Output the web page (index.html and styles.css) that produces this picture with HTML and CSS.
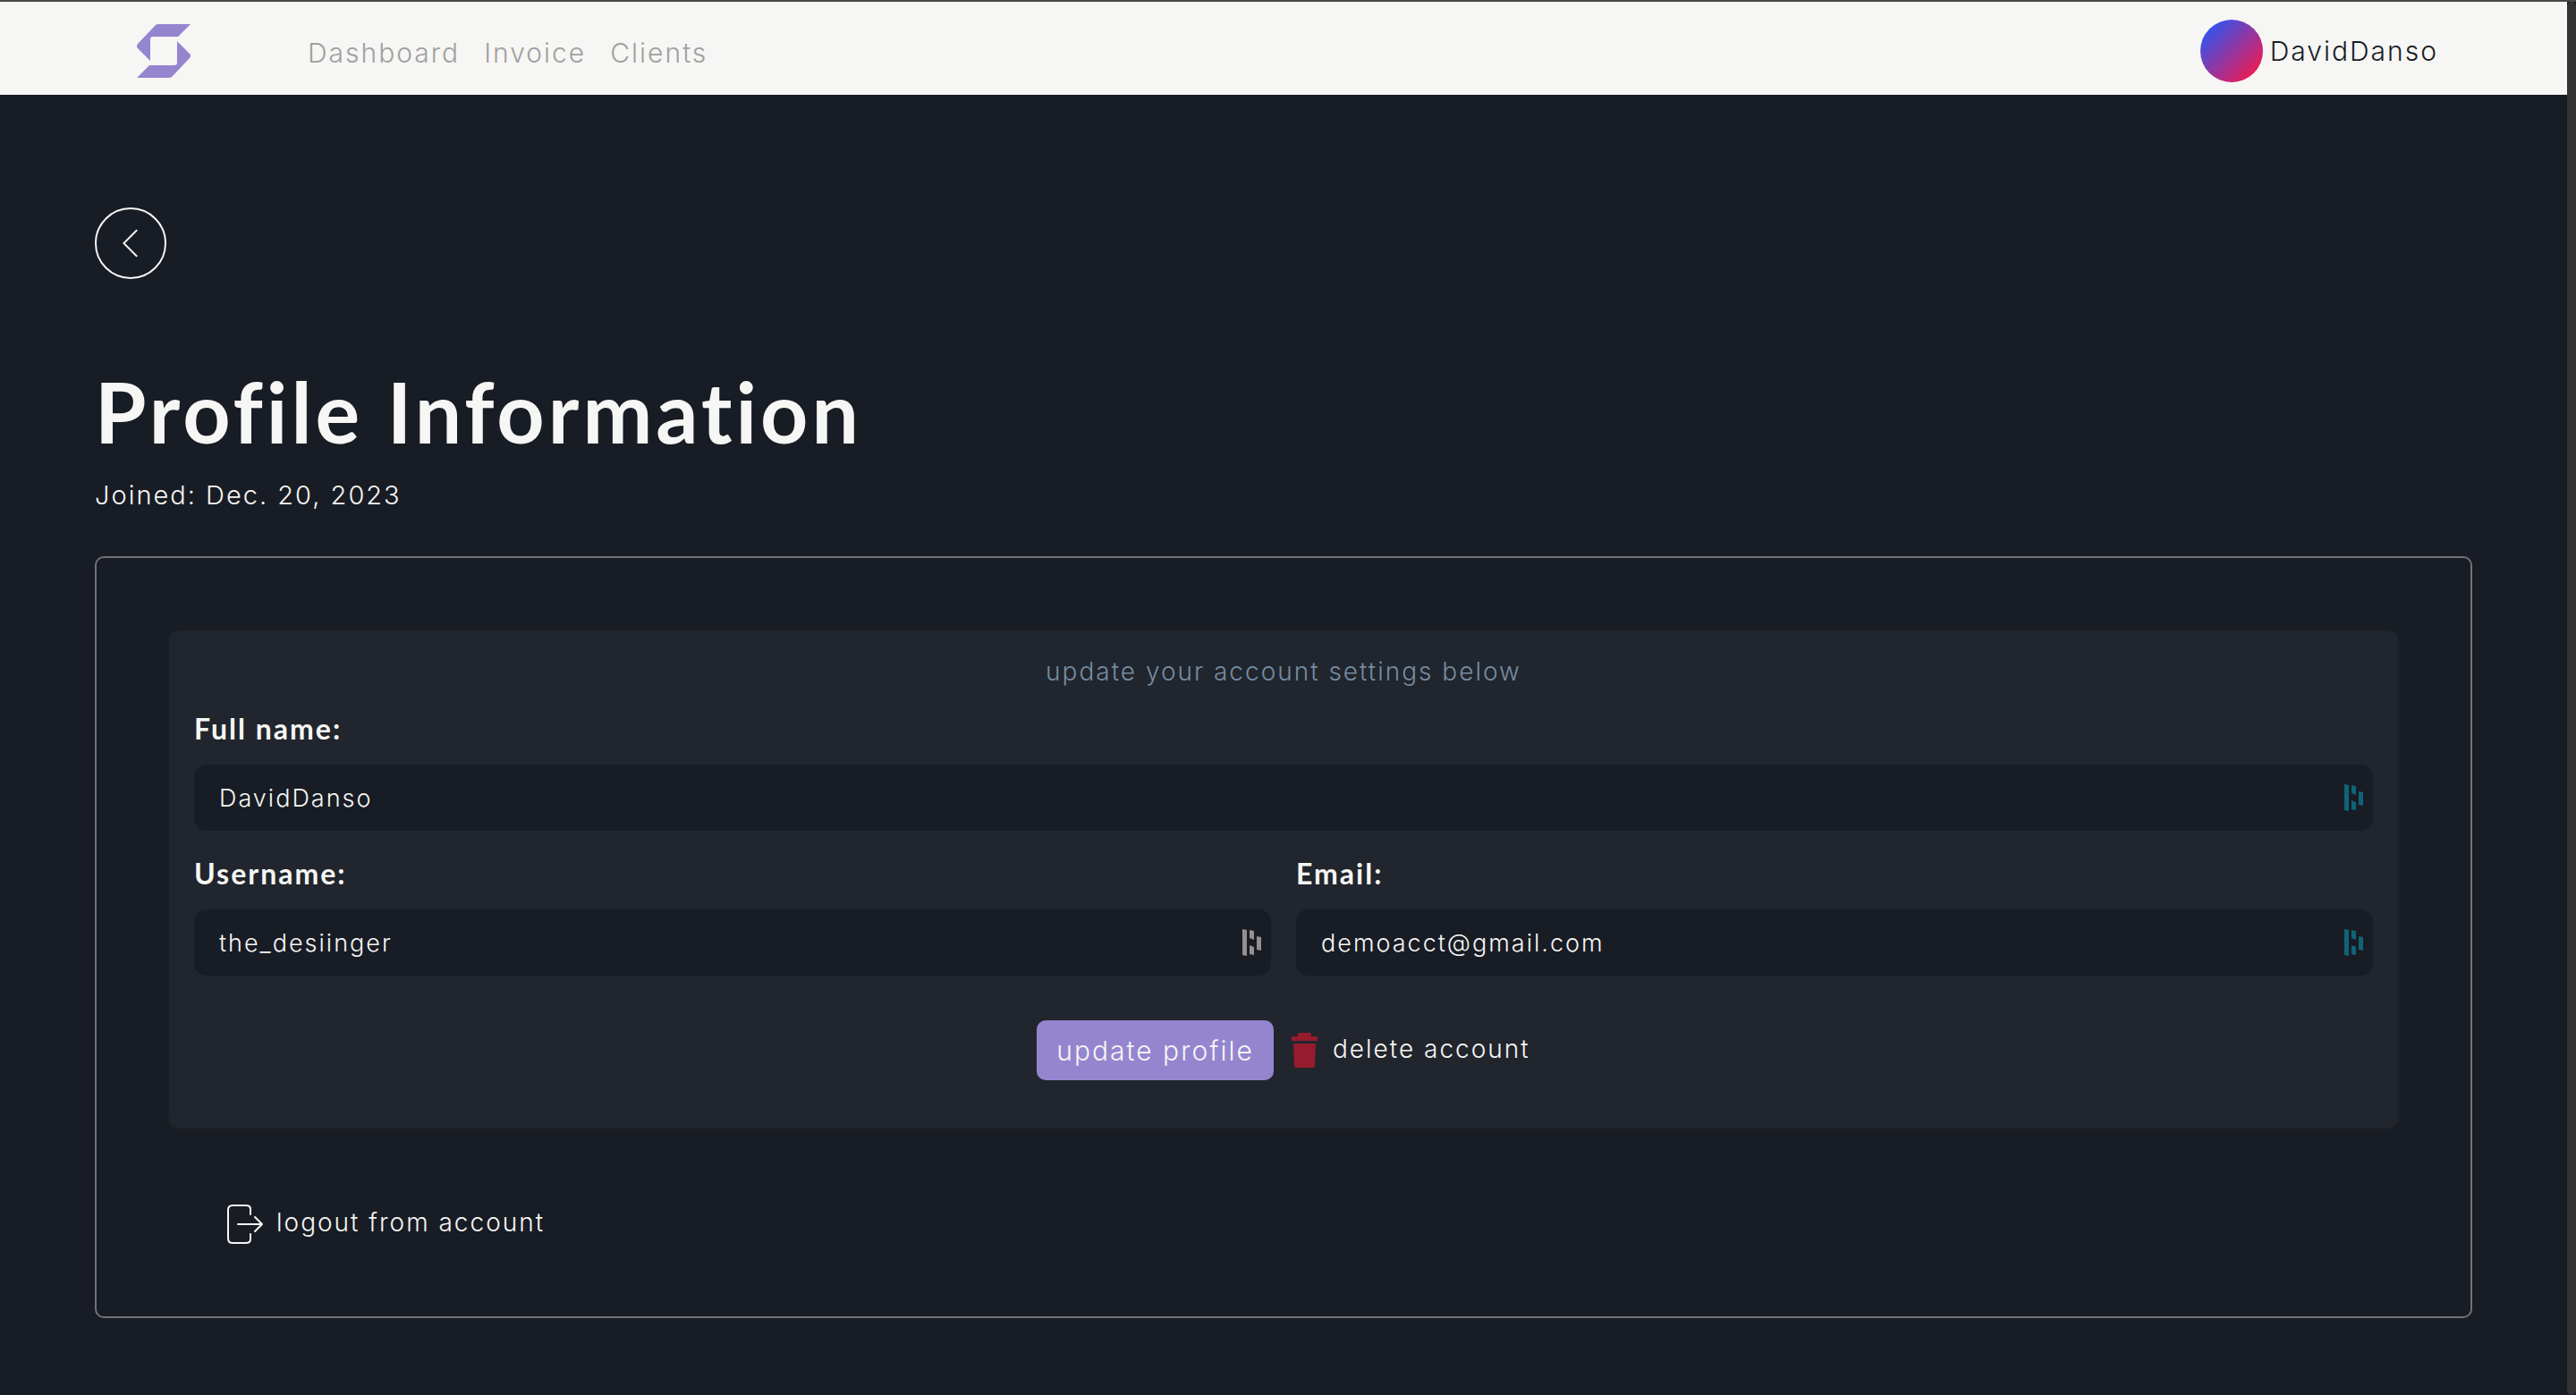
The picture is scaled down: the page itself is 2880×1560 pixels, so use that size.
FILE: index.html
```html
<!DOCTYPE html>
<html lang="en">
<head>
<meta charset="utf-8">
<meta name="viewport" content="width=device-width, initial-scale=1">
<title>Profile Information</title>
<link rel="stylesheet" href="styles.css">
</head>
<body>
<svg class="defs" aria-hidden="true">
  <symbol id="autofill" viewBox="0 0 21 30">
    <path d="M0 0l5 1v29l-5-1zM8 1l5 1v10l-5-2zM8 18l5 2v9l-5-1zM16 8l5 1v15l-5-1z"/>
  </symbol>
</svg>
<div class="window">
  <div class="page">
    <header class="topbar">
      <a class="logo" href="#" aria-label="Home">
        <svg viewBox="0 0 60 60"><path d="M24 0H60L46 14H18Q15 14 15 17V41L1 27Q-1 25 1 22L20 2Q21 0 24 0ZM36 60H0L14 46H42Q45 46 45 43V19L59 33Q61 35 59 38L40 58Q39 60 36 60Z"/></svg>
      </a>
      <nav class="nav">
        <a href="#">Dashboard</a>
        <a href="#">Invoice</a>
        <a href="#">Clients</a>
      </nav>
      <a class="user" href="#"><span class="avatar"></span>DavidDanso</a>
    </header>
    <main class="content">
      <button class="back" type="button" aria-label="Back">
        <svg viewBox="0 0 80 80"><path d="M47 25L32 40L47 55"/></svg>
      </button>
      <h1>Profile Information</h1>
      <p class="joined">Joined: Dec. 20, 2023</p>
      <section class="card">
        <form class="panel">
          <p class="hint">update your account settings below</p>
          <div class="fields">
            <div class="field field-wide">
              <label for="fullname">Full name:</label>
              <div class="control">
                <input id="fullname" type="text" value="DavidDanso">
                <svg class="autofill"><use href="#autofill"/></svg>
              </div>
            </div>
            <div class="field">
              <label for="username">Username:</label>
              <div class="control">
                <input id="username" type="text" value="the_desiinger">
                <svg class="autofill muted"><use href="#autofill"/></svg>
              </div>
            </div>
            <div class="field">
              <label for="email">Email:</label>
              <div class="control">
                <input id="email" type="email" value="demoacct@gmail.com">
                <svg class="autofill"><use href="#autofill"/></svg>
              </div>
            </div>
          </div>
          <div class="actions">
            <button class="update" type="submit">update profile</button>
            <a class="delete" href="#">
              <svg viewBox="0 0 30 39"><path d="M0 4H7V1Q7 0 8 0H21Q22 0 22 1V4H29V9H0ZM2 12H27L26 37Q26 39 24 39H5Q3 39 3 37Z"/></svg>
              <span>delete account</span>
            </a>
          </div>
        </form>
        <a class="logout" href="#">
          <svg viewBox="0 0 42 46"><path d="M27 12V6Q27 2 22 2H7Q2 2 2 7V39Q2 44 7 44H22Q27 44 27 40V34M13 23H40M32 15L40 23L32 31"/></svg>
          <span>logout from account</span>
        </a>
      </section>
    </main>
  </div>
  <div class="scroll-track"></div>
</div>
</body>
</html>
```
FILE: styles.css
```css
:root {
  --bg: #181c24;
  --panel: #21252d;
  --light: #f6f6f4;
  --purple: #9585cf;
}
* { box-sizing: border-box; }
body {
  margin: 0;
  background: var(--bg);
  color: var(--light);
  font-family: Inter, "Liberation Sans", sans-serif;
  font-size: 28px;
  font-weight: 300;
  line-height: 40px;
  letter-spacing: 2px;
}
a { color: inherit; text-decoration: none; }
p, h1 { margin: 0; }
svg { display: block; }
.defs { display: none; }

.window {
  display: flex;
  min-height: 100vh;
  border-top: 2px solid #4a4846;
}
.page { flex: 1; min-width: 0; }
.scroll-track {
  width: 10px;
  background: #333;
  border-radius: 5px;
}

.topbar {
  display: flex;
  align-items: center;
  height: 104px;
  padding: 6px 144px 0 152px;
  background: var(--light);
  color: var(--bg);
  font-size: 30px;
}
.logo svg { width: 62px; height: 60px; fill: var(--purple); }
.nav {
  display: flex;
  gap: 27px;
  margin-left: 130px;
  padding-top: 4px;
  color: #a0a09f;
}
.user {
  display: flex;
  align-items: center;
  gap: 8px;
  margin-left: auto;
}
.avatar {
  width: 70px;
  height: 70px;
  border-radius: 50%;
  background: linear-gradient(135deg, #2b56f5 10%, #f3194f 90%);
}

.content { padding: 126px 106px 80px; }
.back {
  display: block;
  width: 80px;
  height: 80px;
  padding: 0;
  border: 2px solid var(--light);
  border-radius: 50%;
  background: none;
}
.back svg {
  width: 76px;
  height: 76px;
  fill: none;
  stroke: var(--light);
  stroke-width: 2;
  stroke-linecap: round;
}
h1 {
  margin-top: 92px;
  font-family: Lato, sans-serif;
  font-size: 93px;
  font-weight: 700;
  line-height: 112px;
  letter-spacing: 4px;
}
.joined { margin-top: 18px; font-size: 29px; }

.card {
  margin-top: 48px;
  padding: 80px 79px;
  border: 2px solid #727276;
  border-radius: 10px;
}
.panel {
  padding: 25px 28px 53px;
  border: 2px solid #1c2025;
  border-radius: 12px;
  background: var(--panel);
}
.hint { color: #768ca1; text-align: center; }
.fields {
  display: grid;
  grid-template-columns: 1fr 1fr;
  gap: 28px;
  margin-top: 24px;
}
.field-wide { grid-column: 1 / -1; }
.field label {
  display: block;
  margin-bottom: 20px;
  font-family: Lato, sans-serif;
  font-size: 32px;
  font-weight: 700;
}
.control { position: relative; }
.control input {
  display: block;
  width: 100%;
  height: 74px;
  padding: 0 60px 0 28px;
  border: 0;
  border-radius: 14px;
  background: var(--bg);
  color: inherit;
  font: inherit;
  font-size: 27px;
  letter-spacing: inherit;
}
.autofill {
  position: absolute;
  top: 22px;
  right: 11px;
  width: 21px;
  height: 30px;
  fill: #0e6577;
}
.autofill.muted { fill: #968f8d; }

.actions {
  display: flex;
  justify-content: center;
  align-items: center;
  gap: 20px;
  margin-top: 50px;
}
.update {
  height: 67px;
  padding: 0 22px;
  border: 0;
  border-radius: 10px;
  background: var(--purple);
  color: inherit;
  font: inherit;
  font-size: 30px;
  letter-spacing: inherit;
}
.delete, .logout { display: flex; align-items: center; gap: 16px; }
.delete span, .logout span { padding-bottom: 4px; }
.delete svg { width: 30px; height: 39px; fill: #951b2d; }
.logout {
  gap: 14px;
  width: max-content;
  margin: 83px 0 0 66px;
}
.logout svg {
  width: 42px;
  height: 46px;
  fill: none;
  stroke: var(--light);
  stroke-width: 2;
  stroke-linecap: round;
  stroke-linejoin: round;
}
```
